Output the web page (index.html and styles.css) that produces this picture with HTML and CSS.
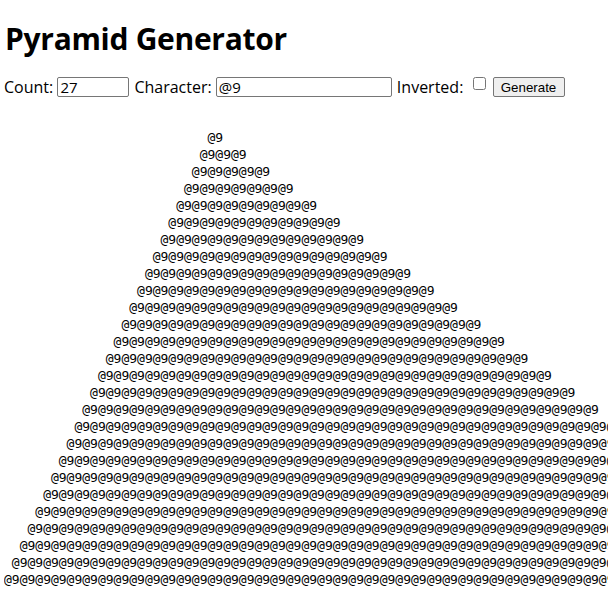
FILE: index.html
```html
<!DOCTYPE html>
<html>
<head>
<meta charset="utf-8">
<title>Pyramid Generator</title>
<link rel="stylesheet" href="styles.css">
</head>
<body>
<h1 class="title">Pyramid Generator</h1>
<div class="controls">
  <label class="field">Count: <input class="input input-count" type="text" value="27"></label>
  <label class="field">Character: <input class="input input-char" type="text" value="@9"></label>
  <label class="field">Inverted: <input class="check" type="checkbox"></label>
  <button class="btn" type="button">Generate</button>
</div>
<pre class="pyramid" id="pyramid"></pre>
<script src="script.js"></script>
</body>
</html>
```

FILE: styles.css
```css
body {
  margin: 0 4px;
  font-family: "Open Sans", "DejaVu Sans", sans-serif;
  color: #000;
  background: #fff;
}
.title {
  font-size: 30px;
  font-weight: 700;
  letter-spacing: -0.3px;
  margin: 21px 0 20px 1px;
  line-height: 36px;
}
.controls {
  display: flex;
  align-items: center;
  font-size: 16px;
  line-height: 20px;
}
.field {
  margin-right: 5px;
  white-space: nowrap;
}
.input {
  box-sizing: border-box;
  height: 20px;
  border: 1px solid #767676;
  border-radius: 2px;
  font-family: inherit;
  font-size: 15px;
  padding: 0 2px;
  vertical-align: top;
}
.input-count { width: 72px; }
.input-char { width: 176px; }
.check {
  width: 13px;
  height: 13px;
  margin: 0 2px 0 5px;
  vertical-align: 3px;
}
.btn {
  box-sizing: border-box;
  width: 72px;
  height: 20px;
  font-family: "Liberation Sans", Arial, sans-serif;
  font-size: 13.33px;
  border: 1px solid #767676;
  border-radius: 2px;
  background: #efefef;
  padding: 0;
}
.pyramid {
  font-family: "DejaVu Sans Mono", monospace;
  font-size: 13px;
  line-height: 17px;
  margin: 32px 0 0 0;
  overflow: hidden;
}
```

FILE: script.js
```js
var rows = [];
var count = 27;
for (var i = 1; i <= count; i++) {
  rows.push(" ".repeat(count - i) + "@9".repeat(2 * i - 1));
}
document.getElementById("pyramid").textContent = rows.join("\n");
```
